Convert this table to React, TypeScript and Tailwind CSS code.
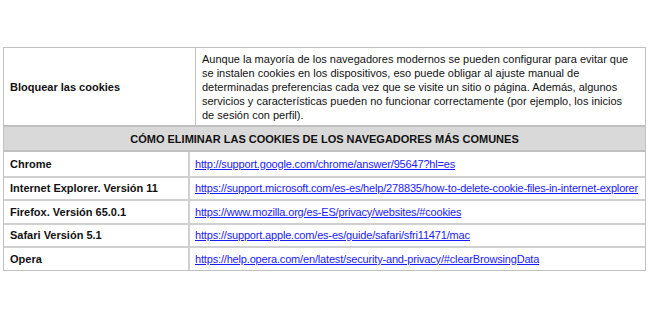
import React from 'react';

const browsers = [
  { name: 'Chrome', url: 'http://support.google.com/chrome/answer/95647?hl=es' },
  {
    name: 'Internet Explorer. Versión 11',
    url: 'https://support.microsoft.com/es-es/help/278835/how-to-delete-cookie-files-in-internet-explorer',
  },
  { name: 'Firefox. Versión 65.0.1', url: 'https://www.mozilla.org/es-ES/privacy/websites/#cookies' },
  { name: 'Safari Versión 5.1', url: 'https://support.apple.com/es-es/guide/safari/sfri11471/mac' },
  { name: 'Opera', url: 'https://help.opera.com/en/latest/security-and-privacy/#clearBrowsingData' },
];

const App: React.FC = () => {
  return (
    <div
      className="w-[667px] h-[325px] bg-white pt-[47px] pl-[3px] text-[11px] leading-[14px] text-[#111]"
      style={{ fontFamily: '"Liberation Sans", Arial, sans-serif' }}
    >
      <div className="w-[643px] border border-[#c0c0c0]">
        {/* Bloquear las cookies */}
        <div className="grid grid-cols-[192px_1fr] h-[77px]">
          <div className="flex items-center pl-[6px] font-bold border-r border-[#c0c0c0]">
            Bloquear las cookies
          </div>
          <div className="pl-[6px] pr-2 pt-[4px]">
            Aunque la mayoría de los navegadores modernos se pueden configurar para evitar que se instalen
            cookies en los dispositivos, eso puede obligar al ajuste manual de determinadas preferencias cada
            vez que se visite un sitio o página. Además, algunos servicios y características pueden no
            funcionar correctamente (por ejemplo, los inicios de sesión con perfil).
          </div>
        </div>

        {/* Cabecera */}
        <div className="h-[27px] flex items-center justify-center font-bold bg-[#d9d9d9] border-y-2 border-[#c0c0c0]">
          CÓMO ELIMINAR LAS COOKIES DE LOS NAVEGADORES MÁS COMUNES
        </div>

        {browsers.map((b, i) => (
          <div
            key={b.name}
            className={`grid grid-cols-[186px_1fr] h-[23.5px] ${i > 0 ? 'border-t-2 border-[#d0d0d0]' : ''}`}
          >
            <div className="flex items-center pl-[6px] font-bold border-r-2 border-[#d0d0d0]">{b.name}</div>
            <div className="flex items-center pl-[5px] whitespace-nowrap overflow-hidden">
              <a href={b.url} className="text-[#1a1aff] underline tracking-[-0.17px]">
                {b.url}
              </a>
            </div>
          </div>
        ))}
      </div>
    </div>
  );
};

export default App;
